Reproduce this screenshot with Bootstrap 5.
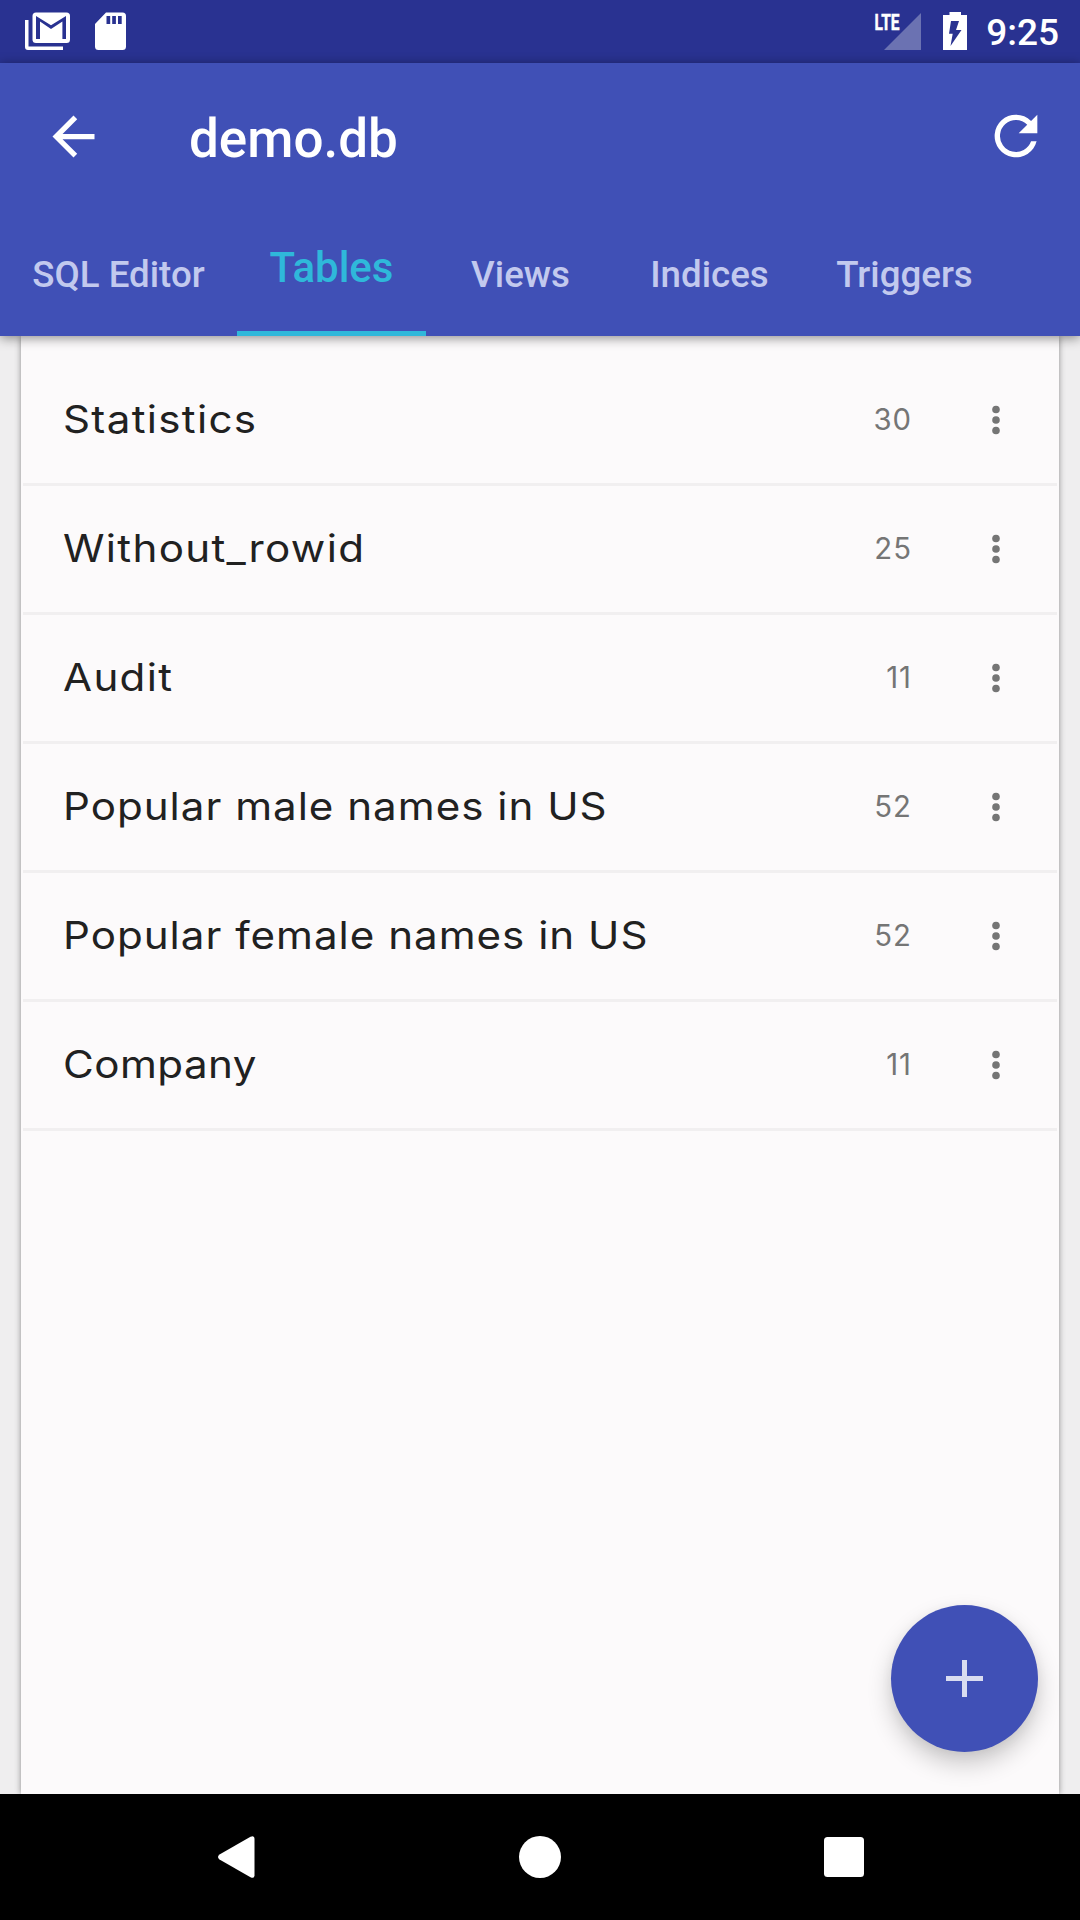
<!DOCTYPE html>
<html lang="en">
<head>
<meta charset="utf-8">
<meta name="viewport" content="width=device-width, initial-scale=1">
<title>demo.db</title>
<link href="https://cdn.jsdelivr.net/npm/bootstrap@5.3.0/dist/css/bootstrap.min.css" rel="stylesheet">
<style>
  body { width: 1080px; height: 1920px; overflow: hidden; background: #efeeef; font-family: Roboto, "Liberation Sans", sans-serif; }
  svg { display: block; flex: none; }
  .status-bar { height: 63px; background: #293291; padding: 0 21px 0 25px; color: #fff; }
  .clock { font-size: 37px; line-height: 65px; font-weight: 500; margin-left: 18px; }
  .battery { margin-left: 20px; }
  .app-head { height: 273px; background: #4050b6; color: #fff; box-shadow: 0 2px 11px rgba(0,0,0,.45); z-index: 2; }
  .title-bar { height: 148px; padding: 0 32px 0 42px; }
  .title-bar svg { margin-bottom: 2px; }
  .db-name { font-size: 53px; line-height: 144px; padding-top: 4px; font-weight: 500; margin-left: 84px; }
  .tab-strip { height: 125px; }
  .tab-strip .nav-link { width: 189px; padding: 0; height: 125px; border-radius: 0; font-size: 36.7px; font-weight: 500; line-height: 127px; color: #c2c9ee; text-align: center; white-space: nowrap; }
  .tab-strip .nav-link:first-child { width: 237px; }
  .tab-strip .nav-link:last-child { width: 201px; }
  .tab-strip .nav-link.active { color: #2fb8da; font-size: 42px; line-height: 114px; border-bottom: 5px solid #2fb8da; }
  .sheet { width: 1038px; background: #fcfafb; box-shadow: 0 0 6px rgba(0,0,0,.42); padding: 21px 2px 0; }
  .table-row { height: 129px; border-bottom: 3px solid #f1eff0; padding: 0 56px 0 40px; font-family: Inter, "Noto Sans", sans-serif; color: #212121; }
  .tname { font-size: 38.3px; letter-spacing: 1.2px; line-height: 124px; padding-bottom: 2px; transform: scaleX(1.1); transform-origin: left; white-space: nowrap; }
  .table-row:nth-child(n+4) .tname { letter-spacing: .9px; }
  .table-row:nth-child(6) .tname { letter-spacing: .4px; }
  .tcount { font-size: 29.3px; letter-spacing: 1px; color: #757575; line-height: 126px; margin-right: 79px; }
  .fab { right: 42px; bottom: 168px; width: 147px; height: 147px; background: #4050b6; box-shadow: 0 12px 24px rgba(0,0,0,.2), 0 3px 12px rgba(0,0,0,.05); z-index: 3; }
  .sys-nav { height: 126px; background: #000; }
  .sys-key { width: 304px; }
</style>
</head>
<body class="d-flex flex-column position-relative">

<header class="status-bar d-flex align-items-start flex-shrink-0">
  <svg width="46" height="63" viewBox="25 0 46 63">
    <path fill="#fff" d="M25 20h3.500v26.500h34.500V50H28a3 3 0 0 1-3-3z"/>
    <rect x="32.500" y="12.500" width="37.500" height="30.500" rx="3.500" fill="#fff"/>
    <path fill="#293291" d="M36 16l15 9.300L66 16v23h-3.600V21.500L51 29l-11-7.500V39h-4z"/>
  </svg>
  <svg class="ms-4" width="32" height="63" viewBox="95 0 32 63">
    <path fill="#fff" d="M106 12.500h16.500a3.500 3.500 0 0 1 3.500 3.500v30.500a3.500 3.500 0 0 1-3.500 3.500h-24a3.500 3.500 0 0 1-3.500-3.500V24z"/>
    <path fill="#293291" d="M106.500 16h3.700v8h-3.700zM112.200 16h3.700v8h-3.700zM118 16h3.700v8H118z"/>
  </svg>
  <svg class="ms-auto" width="48" height="63" viewBox="874 0 48 63">
    <path fill="#6b72b2" d="M884 50l37-37v37z"/>
    <text x="874.500" y="30" font-family="Roboto" font-weight="700" font-size="22.500" fill="#fff" stroke="#fff" stroke-width=".5" textLength="25" lengthAdjust="spacingAndGlyphs">LTE</text>
  </svg>
  <svg class="battery" width="26" height="63" viewBox="942 0 26 63">
    <path fill="#fff" d="M949.500 15v-3h11.500v3h6v35h-24V15z"/>
    <path fill="#293291" d="M951 21h8l-3 9h5.500L950.500 46l2.200-12.300H949z"/>
  </svg>
  <span class="clock">9:25</span>
</header>

<div class="app-head flex-shrink-0 position-relative">
  <div class="title-bar d-flex align-items-center">
    <svg width="63" height="63" viewBox="0 0 24 24" fill="#fff"><path d="M20 11H7.830l5.590-5.590L12 4l-8 8 8 8 1.410-1.410L7.830 13H20z"/></svg>
    <span class="db-name">demo.db</span>
    <svg class="ms-auto" width="64" height="64" viewBox="0 0 24 24" fill="#fff"><path d="M17.650 6.350A7.958 7.958 0 0 0 12 4a8 8 0 1 0 7.730 10h-2.080A6 6 0 1 1 12 6c1.660 0 3.140.69 4.220 1.780L13 11h7V4z"/></svg>
  </div>
  <nav class="tab-strip nav flex-nowrap">
    <a class="nav-link">SQL Editor</a>
    <a class="nav-link active">Tables</a>
    <a class="nav-link">Views</a>
    <a class="nav-link">Indices</a>
    <a class="nav-link">Triggers</a>
  </nav>
</div>

<main class="sheet flex-grow-1 mx-auto">
  <div class="table-row d-flex align-items-center"><span class="tname">Statistics</span><span class="tcount ms-auto">30</span><svg width="10" height="32" viewBox="0 0 10 32" fill="#757575"><circle cx="5" cy="5.500" r="3.800"/><circle cx="5" cy="16" r="3.800"/><circle cx="5" cy="26.500" r="3.800"/></svg></div>
  <div class="table-row d-flex align-items-center"><span class="tname">Without_rowid</span><span class="tcount ms-auto">25</span><svg width="10" height="32" viewBox="0 0 10 32" fill="#757575"><circle cx="5" cy="5.500" r="3.800"/><circle cx="5" cy="16" r="3.800"/><circle cx="5" cy="26.500" r="3.800"/></svg></div>
  <div class="table-row d-flex align-items-center"><span class="tname">Audit</span><span class="tcount ms-auto">11</span><svg width="10" height="32" viewBox="0 0 10 32" fill="#757575"><circle cx="5" cy="5.500" r="3.800"/><circle cx="5" cy="16" r="3.800"/><circle cx="5" cy="26.500" r="3.800"/></svg></div>
  <div class="table-row d-flex align-items-center"><span class="tname">Popular male names in US</span><span class="tcount ms-auto">52</span><svg width="10" height="32" viewBox="0 0 10 32" fill="#757575"><circle cx="5" cy="5.500" r="3.800"/><circle cx="5" cy="16" r="3.800"/><circle cx="5" cy="26.500" r="3.800"/></svg></div>
  <div class="table-row d-flex align-items-center"><span class="tname">Popular female names in US</span><span class="tcount ms-auto">52</span><svg width="10" height="32" viewBox="0 0 10 32" fill="#757575"><circle cx="5" cy="5.500" r="3.800"/><circle cx="5" cy="16" r="3.800"/><circle cx="5" cy="26.500" r="3.800"/></svg></div>
  <div class="table-row d-flex align-items-center"><span class="tname">Company</span><span class="tcount ms-auto">11</span><svg width="10" height="32" viewBox="0 0 10 32" fill="#757575"><circle cx="5" cy="5.500" r="3.800"/><circle cx="5" cy="16" r="3.800"/><circle cx="5" cy="26.500" r="3.800"/></svg></div>
</main>

<button class="fab btn rounded-circle border-0 p-0 position-absolute d-flex align-items-center justify-content-center" aria-label="Add">
  <svg width="37" height="37" viewBox="0 0 37 37" fill="#d9dcf0"><path d="M16 0h5v16h16v5H21v16h-5V21H0v-5h16z"/></svg>
</button>

<footer class="sys-nav d-flex justify-content-center flex-shrink-0">
  <div class="sys-key d-flex justify-content-center"><svg width="38" height="126" viewBox="0 0 38 126"><path fill="#fff" d="M2.500 60.500L33.500 42.800Q37.500 41 37.500 44.800v36.400Q37.500 85 33.500 83.200L2.500 65.500Q-.5 63 2.500 60.500z"/></svg></div>
  <div class="sys-key d-flex justify-content-center"><svg width="42" height="126" viewBox="0 0 42 126"><circle cx="21" cy="63" r="21" fill="#fff"/></svg></div>
  <div class="sys-key d-flex justify-content-center"><svg width="40" height="126" viewBox="0 0 40 126"><rect y="43" width="40" height="40" rx="3.500" fill="#fff"/></svg></div>
</footer>

<script src="https://cdn.jsdelivr.net/npm/bootstrap@5.3.0/dist/js/bootstrap.bundle.min.js"></script>
</body>
</html>
